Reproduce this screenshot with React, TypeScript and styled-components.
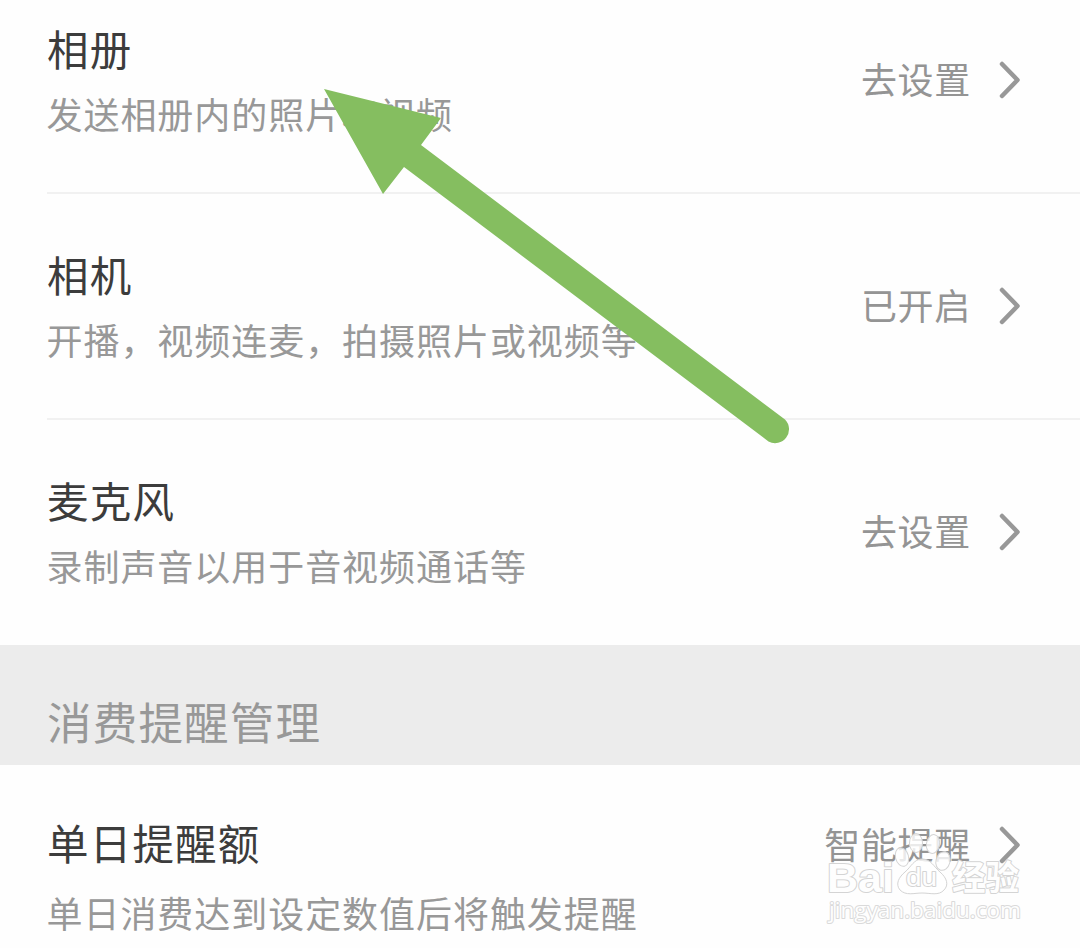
import * as React from 'react';
import styled, { createGlobalStyle } from 'styled-components';

const GlobalStyle = createGlobalStyle`
  * {
    box-sizing: border-box;
  }
  body {
    margin: 0;
    background: #fefefe;
    overflow: hidden;
    font-family: 'Noto Sans CJK SC', sans-serif;
  }
`;

const Page = styled.main`
  position: relative;
  width: 1080px;
  height: 948px;
  overflow: hidden;
  background: #fefefe;
`;

const List = styled.div`
  margin-top: -32px;
`;

const Row = styled.div<{ $last?: boolean }>`
  display: flex;
  justify-content: space-between;
  height: ${(props) => (props.$last ? '225px' : '226px')};
  margin-left: 47px;
  padding-right: 57px;
  border-bottom: ${(props) => (props.$last ? 'none' : '2px solid #f1f1f1')};
`;

const Texts = styled.div<{ $loose?: boolean }>`
  display: flex;
  flex-direction: column;
  gap: ${(props) => (props.$loose ? '10px' : '5px')};
  padding-top: ${(props) => (props.$loose ? '47px' : '50px')};
`;

const Title = styled.div`
  font-size: 41.5px;
  line-height: 60px;
  letter-spacing: 1.2px;
  color: #3c3c3c;
  white-space: nowrap;
`;

const Desc = styled.div`
  font-size: 36px;
  line-height: 60px;
  letter-spacing: 0.95px;
  text-indent: -0.5px;
  color: #989898;
  white-space: nowrap;
`;

const Action = styled.div<{ $top: number }>`
  display: flex;
  align-items: center;
  gap: 28px;
  height: 60px;
  margin-top: ${(props) => props.$top}px;
`;

const Value = styled.span`
  margin-top: -4px;
  font-size: 36px;
  line-height: 60px;
  letter-spacing: 0.7px;
  color: #949494;
`;

const SectionHeader = styled.div`
  height: 120px;
  padding: 41px 0 0 47px;
  background: #ececec;
  font-size: 44.5px;
  line-height: 70px;
  letter-spacing: 1.2px;
  color: #989898;
`;

const Arrow = styled.svg`
  position: absolute;
  left: 310px;
  top: 80px;
`;

const Watermark = styled.svg`
  position: absolute;
  left: 820px;
  top: 825px;
`;

const Chevron = () => (
  <svg width="24" height="40" viewBox="0 0 24 40" fill="none">
    <path d="M3 4L18.5 20L3 36" stroke="#989898" strokeWidth="4.5" strokeLinecap="round" strokeLinejoin="round" />
  </svg>
);

interface SettingRowProps {
  title: string;
  desc: string;
  value: string;
  last?: boolean;
  loose?: boolean;
}

const SettingRow: React.FC<SettingRowProps> = ({ title, desc, value, last, loose }) => (
  <Row $last={last}>
    <Texts $loose={loose}>
      <Title>{title}</Title>
      <Desc>{desc}</Desc>
    </Texts>
    <Action $top={loose ? 50 : 82}>
      <Value>{value}</Value>
      <Chevron />
    </Action>
  </Row>
);

const permissions = [
  { title: '相册', desc: '发送相册内的照片和视频', value: '去设置' },
  { title: '相机', desc: '开播，视频连麦，拍摄照片或视频等', value: '已开启' },
  { title: '麦克风', desc: '录制声音以用于音视频通话等', value: '去设置' },
];

const App: React.FC = () => {
  return (
    <>
      <GlobalStyle />
      <Page>
        <List>
          {permissions.map((item, i) => (
            <SettingRow key={item.title} {...item} last={i === permissions.length - 1} />
          ))}
          <SectionHeader>消费提醒管理</SectionHeader>
          <SettingRow title="单日提醒额" desc="单日消费达到设定数值后将触发提醒" value="智能提醒" last loose />
        </List>

        <Arrow width="490" height="375" viewBox="310 80 490 375">
          <path
            d="M324 89L441 118L421 145L785 419.500A13.9 13.9 0 0 1 768.500 441.500L404 167L383 194Z"
            fill="#85be60"
          />
        </Arrow>

        <Watermark width="215" height="105" viewBox="820 825 215 105">
          <g fill="#fff" fillOpacity="0.8" stroke="#d4d4d4" strokeWidth="1">
            <ellipse cx="902" cy="857" rx="6.500" ry="9.500" transform="rotate(-15 902 857)" />
            <ellipse cx="916" cy="843" rx="6.500" ry="9.500" />
            <ellipse cx="933" cy="844" rx="6.500" ry="9.500" transform="rotate(10 933 844)" />
            <ellipse cx="943" cy="861" rx="7" ry="9.500" transform="rotate(15 943 861)" />
            <path d="M922 859C931 859 934 867 940 872C947 878 949 885 944 890C939 896 930 893 922 893C914 893 906 896 900 890C895 884 899 877 905 872C911 867 914 859 922 859Z" />
          </g>
          <g
            fill="#fefefe"
            stroke="#d4d4d4"
            strokeWidth="2"
            strokeLinejoin="round"
            paintOrder="stroke"
            fontFamily="'Liberation Sans', sans-serif"
          >
            <text x="827" y="892" fontSize="41" fontWeight="bold" textLength="67" lengthAdjust="spacingAndGlyphs">
              Bai
            </text>
            <text x="906" y="886" fontSize="26" textLength="31" lengthAdjust="spacingAndGlyphs">
              du
            </text>
            <text
              x="952"
              y="890"
              fontSize="34"
              fontWeight="bold"
              fontFamily="'Noto Sans CJK SC', sans-serif"
              textLength="67"
              lengthAdjust="spacingAndGlyphs"
            >
              经验
            </text>
            <text
              x="829"
              y="918"
              fontSize="22"
              stroke="#dadada"
              fontFamily="'Open Sans', 'Noto Sans', sans-serif"
              textLength="192"
              lengthAdjust="spacingAndGlyphs"
            >
              jingyan.baidu.com
            </text>
          </g>
        </Watermark>
      </Page>
    </>
  );
};

export default App;
